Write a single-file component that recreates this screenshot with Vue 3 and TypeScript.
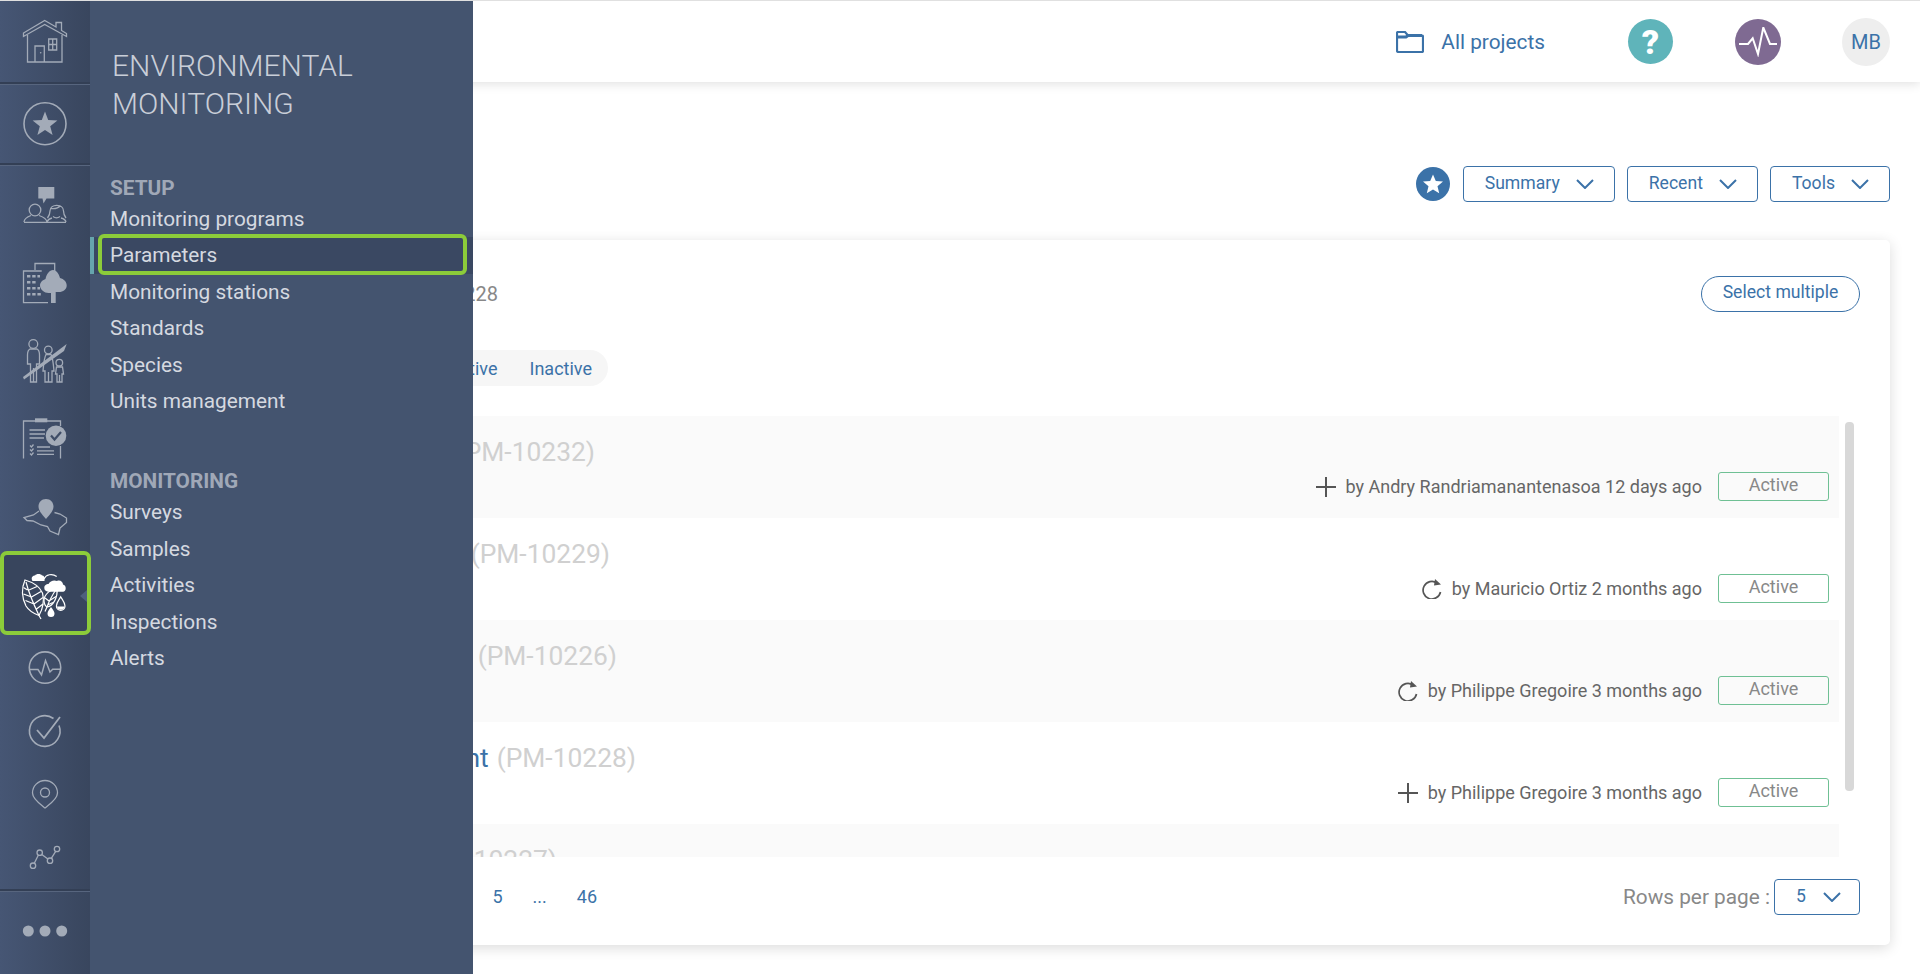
<template>
  <div class="app">
    <aside class="rail">
      <svg class="ri" width="90" height="81" viewBox="0 1 90 81">
        <path d="M23.5 33 L44.7 20.5 L56 27 V22.5 H61.5 V30.5 L66.5 33.5 V36.5 L44.7 24.5 L23.5 36.5 Z" />
        <path d="M27.5 35 V62 H62 V35 M35 62 V46 H44.3 V62" />
        <path d="M48.7 39 H56.7 V50 H48.7 Z M52.7 39 V50 M48.7 44.5 H56.7" />
        <circle class="f" cx="40.7" cy="52.7" r=".8" />
      </svg>
      <div class="sep"></div>
      <svg class="ri" width="90" height="78" viewBox="0 85 90 78">
        <circle cx="45" cy="123.7" r="21" stroke-width="1.6" />
        <path class="f" d="M45 111.5 L48.2 120.1 L57.4 120.5 L50.2 126.2 L52.6 135 L45 130 L37.4 135 L39.8 126.2 L32.6 120.5 L41.8 120.1 Z" />
      </svg>
      <div class="sep"></div>
      <svg class="ri" width="90" height="78" viewBox="0 166 90 78">
        <path class="f" d="M38.3 187 H54.3 V198.5 H46.5 L43.5 203.5 L42.5 198.5 H38.3 Z" />
        <circle cx="35" cy="210" r="5.8" />
        <path d="M24 222 C24.5 218 28 216.5 31 215.5 M39 215.5 C42 216.5 46.5 218 47 222" />
        <path d="M24 222.3 H66" />
        <path d="M50 211 C50 203.5 63.5 203.5 63.5 211 C63.5 213.5 64.5 216 66 218 M50 211 C50 213.5 49 216 47.5 218 M50.5 208.5 C54 209 58.5 208 60.5 205.5" />
        <path d="M53 216.5 C55 218 58 218 60 216.5" />
        <path d="M47 222 C48 219.5 50 218.5 52 218 M61 218 C63 218.5 65.5 219.5 66 222" />
      </svg>
      <svg class="ri" width="90" height="78" viewBox="0 244 90 78">
        <path d="M35 270 V263.5 H54.7 V271" />
        <path d="M41.7 271 H23.5 V302.7 H48" />
        <path class="f" d="M53 270 C56.5 270 59 274 60 278 C64 279 66.7 282 66.7 285.5 C66.7 289.5 63 292 59 292 H55.7 V303 H51 V293 H48.5 C44.5 293 40 289.5 40 285.5 C40 282 43 280 45.5 279 C46.5 274 49.5 270 53 270 Z" />
        <path class="f" d="M27 275 h3.4 v2.6 h-3.4 z M32.2 275 h3.4 v2.6 h-3.4 z M37.4 275 h2.6 v2.6 h-2.6 z M27 281 h3.4 v2.6 h-3.4 z M32.2 281 h3.4 v2.6 h-3.4 z M27 287 h3.4 v2.6 h-3.4 z M32.2 287 h3.4 v2.6 h-3.4 z M37.4 287 h2.6 v2.6 h-2.6 z M27 293 h3.4 v2.6 h-3.4 z M32.2 293 h3.4 v2.6 h-3.4 z M37.4 293 h3.4 v2.6 h-3.4 z" />
      </svg>
      <svg class="ri" width="90" height="78" viewBox="0 322 90 78">
        <path class="f" d="M23 377 L66.7 344 L64 351 L24 379.5 Z" />
        <circle cx="33.3" cy="344" r="4.4" />
        <path d="M30 349 H37 C39 350 39.5 352 39.5 355 V364 H36.5 V382 H30.5 V364 H27.5 V355 C27.5 352 28 350 30 349 Z M33.5 368 V382" />
        <circle cx="48.3" cy="350" r="3.8" />
        <path d="M46 354.5 H51 C53 358 53.5 366 54 371 H52 V382 H45 V371 H43 C43.5 366 44 358 46 354.5 Z M48.5 372 V382" />
        <circle cx="59.3" cy="362.7" r="3.3" />
        <path d="M56.5 367 H62.5 L63.5 374 H62 V382 H57 V374 H55.5 Z M59.5 375 V382" />
      </svg>
      <svg class="ri" width="90" height="78" viewBox="0 400 90 78">
        <path d="M23.5 458.5 V421 H60.5 V426 M60.5 446 V458.5" />
        <path class="f" d="M35 418.3 H47.3 V422.3 H35 Z" />
        <path d="M29.5 430 H45 M29.5 434 H45 M29.5 438 H44 M37 447 H50 M37 450.8 H54 M37 454.4 H54" />
        <path d="M30 445.5 L31.5 447 L33.5 444.5 M30 449.5 L31.5 451 L33.5 448.5 M30 453.5 L31.5 455 L33.5 452.5" />
        <circle class="f" cx="56" cy="435.7" r="10.3" />
        <path class="c" d="M51 435.5 L54.5 439.5 L61 432" />
      </svg>
      <svg class="ri" width="90" height="73" viewBox="0 478 90 73">
        <path class="f" d="M46 499 C50.5 499 53.5 502.5 53.5 506.5 C53.5 511 49 515.5 46 519 C43 515.5 38.5 511 38.5 506.5 C38.5 502.5 41.5 499 46 499 Z" />
        <path d="M39 511 L33.5 515 L24 517.5 L27 520.5 L33 521 L41 525 L47.5 526.5 L50 531 L58.5 534.5 L60 528 L66.5 522.5 L66.5 518 L60 514 L54.5 512.5" />
      </svg>
      <div class="active-item">
        <svg class="leaf" width="83" height="76" viewBox="4 555 83 76">
          <path class="l" d="M25 580 C21.5 588 22 598 26 606 C29 611 35 614 39 615.5 C43 609 44.5 600 42.5 593 C39.5 586 32 582 25 580 Z" />
          <path class="l" d="M39 615.5 L41 619 M26 582 C29 594 34 605 39 615.5 M29 590 L37 586.5 M27.5 590 L23.5 587.5 M31.5 597 L41 591.5 M31.5 597 L23.5 594 M34 604 L43 597.5 M34 604 L25.5 600.5 M36.5 609 L43 604" />
          <path class="l" d="M57 588 C51 589 44.5 594 44 600 C44 603 45.5 606 47 607 C53 606 58 598 57 588 Z" />
          <path class="l" d="M45 611.5 L47 607 C49 601 53 594 57 588 M49 601 L45 598 M49 601 L56 596.5 M47.5 605 L53 602.5" />
          <path class="w" d="M32 580 C31 577 33 575.5 35 575.5 C36 573.5 41 573.5 42 575.5 C44 575.5 45 577 44.5 581 H33 C32.5 581 32 580.5 32 580 Z" />
          <path class="l" d="M44 579 C46 574.5 52 573 56.7 576.5" stroke-width="1.4" />
          <path class="w" d="M44.3 588 C44.3 585 46.5 584 48.5 584 C50 581 54 579.5 57 581 C60 579.5 63 582 63 584.5 C65.5 585 65.7 587 65.7 588.5 C65.7 590.5 64.5 591.7 63 591.7 H49 C46.5 591.7 44.3 590.5 44.3 588 Z" />
          <path class="w" d="M51 607 C52.8 609.5 54.5 611.5 54.5 613.5 A3.5 3.5 0 0 1 47.5 613.5 C47.5 611.5 49.2 609.5 51 607 Z" />
          <path class="l" d="M60.7 596.7 C62.5 600 65 602.5 65 606 A4.3 4.3 0 0 1 56.4 606 C56.4 602.5 58.9 600 60.7 596.7 Z" />
          <path class="w" d="M57 606.5 A3.8 3.8 0 0 0 64.5 606.5 Z" />
        </svg>
        <span class="caret"></span>
      </div>
      <svg class="ri" width="90" height="65" viewBox="0 635 90 65">
        <circle cx="45" cy="667.6" r="15.7" stroke-width="1.6" />
        <path d="M30 669.5 H38 L41.5 675 L45.5 660.5 L50 672 L52.7 669.3 H60" stroke-width="1.5" />
      </svg>
      <svg class="ri" width="90" height="64" viewBox="0 700 90 64">
        <path d="M53.5 718.5 A15.3 15.3 0 1 0 59 725.5" stroke-width="1.6" />
        <path d="M37 730 L44 738 L60 717" stroke-width="1.8" />
      </svg>
      <svg class="ri" width="90" height="62" viewBox="0 764 90 62">
        <path d="M45 808 C40 804 32.5 799 32.5 793 A12.5 12.5 0 0 1 57.5 793 C57.5 799 50 804 45 808 Z" />
        <circle cx="45" cy="792.5" r="4.5" />
      </svg>
      <svg class="ri" width="90" height="63" viewBox="0 826 90 63">
        <path d="M34.3 863.3 L38.4 855 M41.8 854.4 L47.9 859 M51.3 858.4 L55.7 851.3" />
        <circle cx="33" cy="865.7" r="2.7" />
        <circle cx="39.7" cy="852.7" r="2.7" />
        <circle cx="50" cy="860.7" r="2.7" />
        <circle cx="57" cy="849" r="2.7" />
      </svg>
      <div class="sep"></div>
      <svg class="ri" width="90" height="81" viewBox="0 892 90 81">
        <circle class="f" cx="28.3" cy="931" r="5.5" />
        <circle class="f" cx="45" cy="931" r="5.5" />
        <circle class="f" cx="61.7" cy="931" r="5.5" />
      </svg>
    </aside>

    <nav class="panel">
      <h2 class="panel-title">ENVIRONMENTAL MONITORING</h2>
      <div v-for="g in menu" :key="g.title" class="menu-group">
        <h3 class="menu-head">{{ g.title }}</h3>
        <a v-for="it in g.items" :key="it" class="menu-item" :class="{ current: it === 'Parameters' }">
          <span>{{ it }}</span>
        </a>
      </div>
    </nav>

    <main class="main">
      <header class="topbar">
        <svg class="folder" width="28" height="22" viewBox="0 0 28 22">
          <path d="M1 4 V2 C1 1.4 1.4 1 2 1 H9 L12 4.5 H26 C26.6 4.5 27 5 27 5.5 V20 C27 20.6 26.6 21 26 21 H2.5 C1.7 21 1 20.4 1 19.5 Z" />
          <path d="M1 6 H10 L12 4.5 H26" stroke-width="3" />
        </svg>
        <a class="projects">All projects</a>
        <span class="round help">?</span>
        <span class="round pulse">
          <svg width="38" height="30" viewBox="0 -2 38 30">
            <path d="M0 15 H9 L13.7 9.3 L19 25 L24.3 -1.5 L31 15 H38" />
          </svg>
        </span>
        <span class="round user">MB</span>
      </header>

      <div class="toolbar">
        <span class="fav">
          <svg width="22" height="22" viewBox="0 0 22 22">
            <path d="M11 1.5 L13.8 8 L21 8.6 L15.5 13.2 L17.2 20.3 L11 16.5 L4.8 20.3 L6.5 13.2 L1 8.6 L8.2 8 Z" />
          </svg>
        </span>
        <button v-for="b in toolButtons" :key="b" class="tool-btn">
          {{ b }}
          <svg class="chev" width="18" height="10" viewBox="0 0 18 10"><path d="M1 1 L9 9 L17 1" /></svg>
        </button>
      </div>

      <section class="card">
        <div class="card-top">
          <span class="count">Total programs: 228</span>
          <button class="select-multiple">Select multiple</button>
        </div>
        <div class="tabs">
          <a>Active</a>
          <a>Inactive</a>
        </div>
        <div class="list">
          <div v-for="r in rows" :key="r.code" class="row">
            <div class="title" :style="{ width: r.titleEnd - 200 + 'px' }">
              <span class="name">{{ r.name }}</span>
              <span class="code">({{ r.code }})</span>
            </div>
            <div v-if="r.by" class="meta">
              <svg v-if="r.kind === 'new'" class="meta-ico" width="20" height="20" viewBox="0 0 20 20">
                <path d="M10 0 V20 M0 10 H20" />
              </svg>
              <svg v-else class="meta-ico" width="20" height="20" viewBox="0 0 20 20">
                <path d="M15 4 A8.8 8.8 0 1 0 18.5 13" stroke-width="1.7" />
                <path class="head" d="M13 0 L19 5.5 L12 6.5 Z" />
              </svg>
              <span class="by">by {{ r.by }} {{ r.when }}</span>
              <span class="badge">Active</span>
            </div>
          </div>
          <span class="thumb"></span>
        </div>
        <div class="card-foot">
          <div class="pages">
            <a v-for="p in pages" :key="p">{{ p }}</a>
          </div>
          <div class="per-page">
            <span>Rows per page :</span>
            <button class="rows-select">
              5
              <svg class="chev" width="18" height="10" viewBox="0 0 18 10"><path d="M1 1 L9 9 L17 1" /></svg>
            </button>
          </div>
        </div>
      </section>
    </main>
  </div>
</template>

<script setup lang="ts">
interface MenuGroup {
  title: string
  items: string[]
}

interface Row {
  name: string
  code: string
  by?: string
  when?: string
  kind?: 'new' | 'update'
  titleEnd: number
}

const menu: MenuGroup[] = [
  {
    title: 'SETUP',
    items: ['Monitoring programs', 'Parameters', 'Monitoring stations', 'Standards', 'Species', 'Units management'],
  },
  {
    title: 'MONITORING',
    items: ['Surveys', 'Samples', 'Activities', 'Inspections', 'Alerts'],
  },
]

const toolButtons = ['Summary', 'Recent', 'Tools']
const pages = ['1', '2', '3', '4', '5', '...', '46']

const rows: Row[] = [
  { name: 'Air quality', code: 'PM-10232', by: 'Andry Randriamanantenasoa', when: '12 days ago', kind: 'new', titleEnd: 595 },
  { name: 'Water sampling', code: 'PM-10229', by: 'Mauricio Ortiz', when: '2 months ago', kind: 'update', titleEnd: 610 },
  { name: 'Soil monitoring', code: 'PM-10226', by: 'Philippe Gregoire', when: '3 months ago', kind: 'update', titleEnd: 617 },
  { name: 'Noise assessment', code: 'PM-10228', by: 'Philippe Gregoire', when: '3 months ago', kind: 'new', titleEnd: 636 },
  { name: 'Fauna', code: 'PM-10227', titleEnd: 557 },
]
</script>

<style scoped>
.app {
  position: relative;
  display: flex;
  height: 974px;
  box-sizing: border-box;
  border-top: 1px solid #e0e0e0;
  overflow: hidden;
  font-family: Roboto, "Liberation Sans", sans-serif;
  color: #666;
}

/* icon rail */
.rail {
  width: 90px;
  flex-shrink: 0;
  display: flex;
  flex-direction: column;
  background: linear-gradient(90deg, #465674 0%, #39465e 100%);
  position: relative;
  z-index: 3;
}

.ri {
  display: block;
  flex-shrink: 0;
  fill: none;
  stroke: #a3abb8;
  stroke-width: 1.3;
}

.ri .f {
  fill: #a3abb8;
  stroke: none;
}

.ri .c {
  stroke: #3f4d67;
  stroke-width: 2.2;
}

.sep {
  height: 2px;
  flex-shrink: 0;
  background: #333f55;
  border-bottom: 1px solid #57657e;
}

.active-item {
  position: relative;
  width: 91px;
  height: 84px;
  flex-shrink: 0;
  box-sizing: border-box;
  border: 4px solid #8ccc3a;
  border-radius: 7px;
  background: #38455d;
}

.leaf {
  display: block;
  fill: none;
}

.leaf .l {
  stroke: #fff;
  stroke-width: 1.2;
}

.leaf .w {
  fill: #fff;
}

.caret {
  position: absolute;
  left: 76px;
  top: 35px;
  border-style: solid;
  border-width: 6px 7px 6px 0;
  border-color: transparent #4f607e transparent transparent;
}

/* menu panel */
.panel {
  position: absolute;
  top: 0;
  bottom: 0;
  left: 90px;
  width: 383px;
  background: #44546f;
  z-index: 2;
}

.panel-title {
  margin: 46px 90px 51px 22px;
  font-size: 30px;
  line-height: 38px;
  font-weight: 300;
  color: #c9ced8;
}

.menu-group {
  margin-bottom: 48px;
}

.menu-head {
  margin: 0 0 0 20px;
  height: 27px;
  font-size: 20.8px;
  line-height: 28px;
  font-weight: 700;
  color: #a0a8b7;
}

.menu-item {
  position: relative;
  display: block;
  height: 36.4px;
  padding-left: 20px;
  font-size: 20.8px;
  line-height: 36.4px;
  color: #d5d9e0;
}

.menu-item.current {
  background: #3a4862;
}

.menu-item.current::before {
  content: '';
  position: absolute;
  left: 0;
  top: 0;
  bottom: 0;
  width: 4px;
  background: #66a5ad;
}

.menu-item.current::after {
  content: '';
  position: absolute;
  left: 8px;
  right: 6px;
  top: -3px;
  bottom: -1px;
  border: 4px solid #8ccc3a;
  border-radius: 6px;
}

/* main */
.main {
  flex: 1;
  min-width: 0;
  display: flex;
  flex-direction: column;
}

.topbar {
  height: 81px;
  flex-shrink: 0;
  box-sizing: border-box;
  display: flex;
  align-items: center;
  justify-content: flex-end;
  padding-right: 30px;
  background: #fff;
  box-shadow: 0 2px 10px rgba(0, 0, 0, 0.12);
}

.folder {
  fill: none;
  stroke: #3b72a8;
  stroke-width: 2.2;
  margin-right: 17px;
}

.projects {
  font-size: 20.8px;
  color: #3b72a8;
  margin-right: 83px;
}

.round {
  display: flex;
  align-items: center;
  justify-content: center;
  border-radius: 50%;
  flex-shrink: 0;
}

.help {
  width: 45px;
  height: 45px;
  margin-right: 62px;
  background: #5fb4ba;
  color: #fff;
  font-size: 34px;
  font-weight: 900;
}

.pulse {
  width: 46px;
  height: 46px;
  margin-right: 61px;
  background: #7f6a92;
}

.pulse svg {
  fill: none;
  stroke: #fff;
  stroke-width: 2;
}

.user {
  width: 48px;
  height: 48px;
  background: #eee;
  color: #3b72a8;
  font-size: 20px;
}

.toolbar {
  display: flex;
  align-items: center;
  justify-content: flex-end;
  gap: 12px;
  margin-top: 84px;
  padding-right: 30px;
}

.fav {
  width: 34px;
  height: 34px;
  margin-right: 1px;
  border-radius: 50%;
  background: #3b72a8;
  display: flex;
  align-items: center;
  justify-content: center;
}

.fav svg {
  fill: #fff;
}

button {
  font-family: inherit;
  background: #fff;
  color: #3b72a8;
  font-size: 17.6px;
  line-height: 1;
  border: 1px solid #3b72a8;
  cursor: pointer;
}

.tool-btn {
  display: flex;
  align-items: center;
  gap: 16px;
  height: 36px;
  padding: 0 20px 0 21px;
  border-radius: 4px;
}

.chev {
  fill: none;
  stroke: #3b72a8;
  stroke-width: 2;
}

.card {
  margin: 38px 30px 0 60px;
  height: 705px;
  box-sizing: border-box;
  padding: 36px 0 0 30px;
  background: #fff;
  border-radius: 5px;
  box-shadow: 0 3px 14px rgba(0, 0, 0, 0.14);
  display: flex;
  flex-direction: column;
}

.card-top {
  display: flex;
  align-items: center;
  justify-content: space-between;
  padding-right: 30px;
  height: 36px;
}

.count {
  width: 318px;
  text-align: right;
  font-size: 20px;
  color: #888;
}

.select-multiple {
  width: 159px;
  height: 36px;
  border-radius: 18px;
  padding: 0 0 2px;
}

.tabs {
  margin-top: 38px;
  width: 428px;
  height: 36px;
  box-sizing: border-box;
  padding-right: 16px;
  display: flex;
  align-items: center;
  justify-content: flex-end;
  gap: 32px;
  background: #f6f6f6;
  border-radius: 18px;
  font-size: 18px;
  color: #3b72a8;
}

.list {
  position: relative;
  margin-top: 30px;
  height: 441px;
  overflow: hidden;
  padding-right: 51px;
  flex-shrink: 0;
}

.row {
  height: 102px;
  box-sizing: border-box;
  padding: 18px 10px 0 20px;
}

.row:nth-child(odd) {
  background: #fafafa;
}

.title {
  height: 36px;
  line-height: 36px;
  font-size: 26.4px;
  text-align: right;
  white-space: nowrap;
}

.name {
  color: #3b72a8;
}

.code {
  margin-left: 8px;
  color: #d0d0d0;
}

.meta {
  display: flex;
  align-items: center;
  justify-content: flex-end;
  margin-top: 2px;
  height: 29px;
}

.meta-ico {
  fill: none;
  stroke: #555;
  stroke-width: 2;
  margin-right: 10px;
}

.meta-ico .head {
  fill: #555;
  stroke: none;
}

.by {
  font-size: 18px;
  color: #666;
}

.badge {
  margin-left: 16px;
  width: 111px;
  height: 29px;
  box-sizing: border-box;
  border: 1px solid #6fc094;
  border-radius: 3px;
  text-align: center;
  font-size: 18px;
  line-height: 24px;
  color: #888;
}

.thumb {
  position: absolute;
  top: 6px;
  right: 36px;
  width: 9px;
  height: 369px;
  background: #d8d8d8;
  border-radius: 4px;
}

.card-foot {
  flex: 1;
  display: flex;
  align-items: flex-start;
  justify-content: space-between;
  padding: 22px 30px 0 0;
}

.pages {
  width: 417px;
  height: 34px;
  display: flex;
  align-items: center;
  justify-content: flex-end;
  gap: 30px;
  font-size: 18px;
  color: #3b72a8;
}

.per-page {
  display: flex;
  align-items: center;
  gap: 4px;
  font-size: 20.8px;
  color: #888;
}

.rows-select {
  display: flex;
  align-items: center;
  gap: 17px;
  height: 36px;
  width: 86px;
  padding: 0 0 0 21px;
  border-radius: 4px;
}
</style>

<style>
html,
body {
  margin: 0;
  background: #fff;
}
</style>
